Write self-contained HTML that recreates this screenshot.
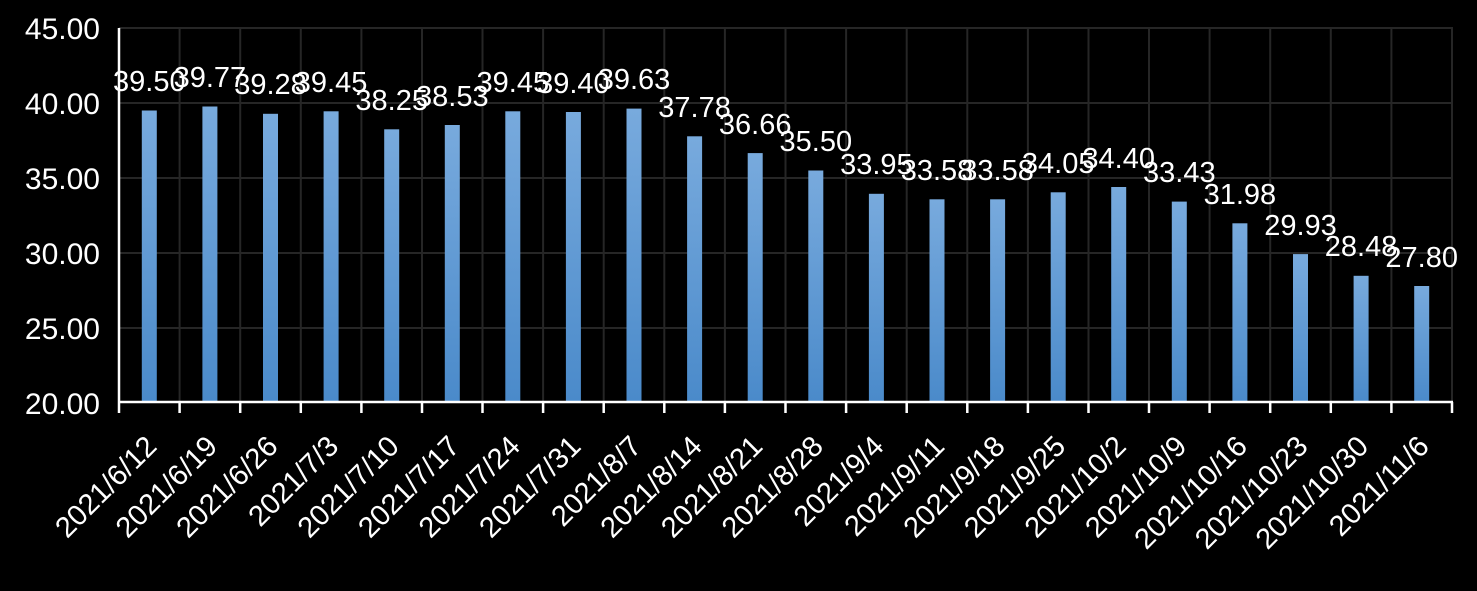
<!DOCTYPE html>
<html><head><meta charset="utf-8"><style>
html,body{margin:0;padding:0;background:#000;width:1477px;height:591px;overflow:hidden}
svg{display:block}
text{font-family:"Liberation Sans",sans-serif;fill:#fff}
</style></head><body>
<svg width="1477" height="591" viewBox="0 0 1477 591" xmlns="http://www.w3.org/2000/svg">
<defs><linearGradient id="g" x1="0" y1="0" x2="0" y2="1"><stop offset="0" stop-color="#78aadd"/><stop offset="1" stop-color="#4a8aca"/></linearGradient></defs>
<g stroke="#262626" stroke-width="2">
<line x1="119" y1="28" x2="1453" y2="28"/><line x1="119" y1="103" x2="1453" y2="103"/><line x1="119" y1="178" x2="1453" y2="178"/><line x1="119" y1="253" x2="1453" y2="253"/><line x1="119" y1="328" x2="1453" y2="328"/>
<line x1="179.6" y1="28" x2="179.6" y2="402"/><line x1="240.2" y1="28" x2="240.2" y2="402"/><line x1="300.8" y1="28" x2="300.8" y2="402"/><line x1="361.4" y1="28" x2="361.4" y2="402"/><line x1="422" y1="28" x2="422" y2="402"/><line x1="482.5" y1="28" x2="482.5" y2="402"/><line x1="543.1" y1="28" x2="543.1" y2="402"/><line x1="603.7" y1="28" x2="603.7" y2="402"/><line x1="664.3" y1="28" x2="664.3" y2="402"/><line x1="724.9" y1="28" x2="724.9" y2="402"/><line x1="785.5" y1="28" x2="785.5" y2="402"/><line x1="846.1" y1="28" x2="846.1" y2="402"/><line x1="906.7" y1="28" x2="906.7" y2="402"/><line x1="967.3" y1="28" x2="967.3" y2="402"/><line x1="1027.9" y1="28" x2="1027.9" y2="402"/><line x1="1088.5" y1="28" x2="1088.5" y2="402"/><line x1="1149" y1="28" x2="1149" y2="402"/><line x1="1209.6" y1="28" x2="1209.6" y2="402"/><line x1="1270.2" y1="28" x2="1270.2" y2="402"/><line x1="1330.8" y1="28" x2="1330.8" y2="402"/><line x1="1391.4" y1="28" x2="1391.4" y2="402"/><line x1="1452" y1="28" x2="1452" y2="402"/>
</g>
<g fill="url(#g)">
<rect x="141.8" y="110.5" width="15" height="291.5"/><rect x="202.4" y="106.5" width="15" height="295.5"/><rect x="263" y="113.8" width="15" height="288.2"/><rect x="323.6" y="111.3" width="15" height="290.7"/><rect x="384.2" y="129.3" width="15" height="272.7"/><rect x="444.8" y="125" width="15" height="277"/><rect x="505.3" y="111.3" width="15" height="290.7"/><rect x="565.9" y="112" width="15" height="290"/><rect x="626.5" y="108.6" width="15" height="293.4"/><rect x="687.1" y="136.3" width="15" height="265.7"/><rect x="747.7" y="153.1" width="15" height="248.9"/><rect x="808.3" y="170.5" width="15" height="231.5"/><rect x="868.9" y="193.8" width="15" height="208.2"/><rect x="929.5" y="199.3" width="15" height="202.7"/><rect x="990.1" y="199.3" width="15" height="202.7"/><rect x="1050.7" y="192.3" width="15" height="209.7"/><rect x="1111.2" y="187" width="15" height="215"/><rect x="1171.8" y="201.6" width="15" height="200.4"/><rect x="1232.4" y="223.3" width="15" height="178.7"/><rect x="1293" y="254.1" width="15" height="147.9"/><rect x="1353.6" y="275.8" width="15" height="126.2"/><rect x="1414.2" y="286" width="15" height="116"/>
</g>
<g stroke="#fff" stroke-width="2.5">
<line x1="119" y1="28" x2="119" y2="413"/><line x1="118" y1="402" x2="1453" y2="402"/>
<line x1="179.6" y1="402" x2="179.6" y2="413"/><line x1="240.2" y1="402" x2="240.2" y2="413"/><line x1="300.8" y1="402" x2="300.8" y2="413"/><line x1="361.4" y1="402" x2="361.4" y2="413"/><line x1="422" y1="402" x2="422" y2="413"/><line x1="482.5" y1="402" x2="482.5" y2="413"/><line x1="543.1" y1="402" x2="543.1" y2="413"/><line x1="603.7" y1="402" x2="603.7" y2="413"/><line x1="664.3" y1="402" x2="664.3" y2="413"/><line x1="724.9" y1="402" x2="724.9" y2="413"/><line x1="785.5" y1="402" x2="785.5" y2="413"/><line x1="846.1" y1="402" x2="846.1" y2="413"/><line x1="906.7" y1="402" x2="906.7" y2="413"/><line x1="967.3" y1="402" x2="967.3" y2="413"/><line x1="1027.9" y1="402" x2="1027.9" y2="413"/><line x1="1088.5" y1="402" x2="1088.5" y2="413"/><line x1="1149" y1="402" x2="1149" y2="413"/><line x1="1209.6" y1="402" x2="1209.6" y2="413"/><line x1="1270.2" y1="402" x2="1270.2" y2="413"/><line x1="1330.8" y1="402" x2="1330.8" y2="413"/><line x1="1391.4" y1="402" x2="1391.4" y2="413"/><line x1="1452" y1="402" x2="1452" y2="413"/>
</g>
<g font-size="30" text-anchor="end">
<text x="100" y="39">45.00</text><text x="100" y="114">40.00</text><text x="100" y="189">35.00</text><text x="100" y="264">30.00</text><text x="100" y="339">25.00</text><text x="100" y="414">20.00</text>
</g>
<g font-size="29" text-anchor="middle">
<text x="149.3" y="91">39.50</text><text x="209.9" y="87">39.77</text><text x="270.5" y="94">39.28</text><text x="331.1" y="92">39.45</text><text x="391.7" y="110">38.25</text><text x="452.3" y="106">38.53</text><text x="512.8" y="92">39.45</text><text x="573.4" y="93">39.40</text><text x="634" y="89">39.63</text><text x="694.6" y="117">37.78</text><text x="755.2" y="134">36.66</text><text x="815.8" y="151">35.50</text><text x="876.4" y="174">33.95</text><text x="937" y="180">33.58</text><text x="997.6" y="180">33.58</text><text x="1058.2" y="173">34.05</text><text x="1118.7" y="168">34.40</text><text x="1179.3" y="182">33.43</text><text x="1239.9" y="204">31.98</text><text x="1300.5" y="235">29.93</text><text x="1361.1" y="256">28.48</text><text x="1421.7" y="267">27.80</text>
</g>
<g font-size="29" text-anchor="end">
<text transform="translate(158.3,448) rotate(-45)">2021/6/12</text>
<text transform="translate(218.9,448) rotate(-45)">2021/6/19</text>
<text transform="translate(279.5,448) rotate(-45)">2021/6/26</text>
<text transform="translate(340.1,448) rotate(-45)">2021/7/3</text>
<text transform="translate(400.7,448) rotate(-45)">2021/7/10</text>
<text transform="translate(461.3,448) rotate(-45)">2021/7/17</text>
<text transform="translate(521.8,448) rotate(-45)">2021/7/24</text>
<text transform="translate(582.4,448) rotate(-45)">2021/7/31</text>
<text transform="translate(643,448) rotate(-45)">2021/8/7</text>
<text transform="translate(703.6,448) rotate(-45)">2021/8/14</text>
<text transform="translate(764.2,448) rotate(-45)">2021/8/21</text>
<text transform="translate(824.8,448) rotate(-45)">2021/8/28</text>
<text transform="translate(885.4,448) rotate(-45)">2021/9/4</text>
<text transform="translate(946,448) rotate(-45)">2021/9/11</text>
<text transform="translate(1006.6,448) rotate(-45)">2021/9/18</text>
<text transform="translate(1067.2,448) rotate(-45)">2021/9/25</text>
<text transform="translate(1127.7,448) rotate(-45)">2021/10/2</text>
<text transform="translate(1188.3,448) rotate(-45)">2021/10/9</text>
<text transform="translate(1248.9,448) rotate(-45)">2021/10/16</text>
<text transform="translate(1309.5,448) rotate(-45)">2021/10/23</text>
<text transform="translate(1370.1,448) rotate(-45)">2021/10/30</text>
<text transform="translate(1430.7,448) rotate(-45)">2021/11/6</text>
</g>
</svg>
</body></html>
